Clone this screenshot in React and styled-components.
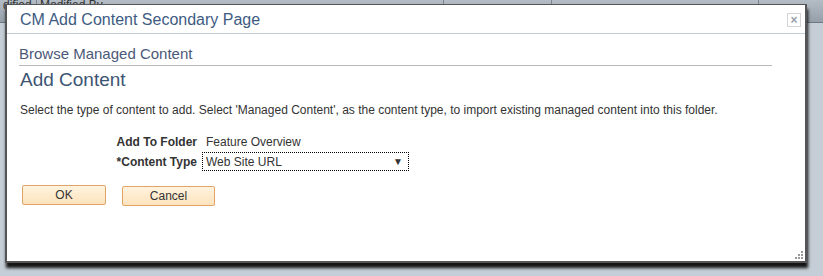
import React from "react";
import styled, { createGlobalStyle } from "styled-components";

const GlobalStyle = createGlobalStyle`
  html, body {
    margin: 0;
    padding: 0;
    background: #c5ced6;
    font-family: "Liberation Sans", Arial, sans-serif;
  }
`;

const Page = styled.div`
  position: relative;
  width: 823px;
  height: 276px;
  overflow: hidden;
  background: #c5ced6;
`;

const BackHeader = styled.div`
  display: flex;
  height: 22px;
  background: linear-gradient(#b4bdc6, #959fa9);
  border-bottom: 1px solid #6f7780;
  font-size: 12px;
  color: #333;
`;

const BackCell = styled.div`
  width: ${(p) => p.w}px;
  border-right: 1px solid #7d858e;
  padding: 0 3px;
  line-height: 10px;
  white-space: nowrap;
  overflow: hidden;
`;

const Modal = styled.div`
  position: absolute;
  left: 5px;
  top: 4px;
  width: 798px;
  height: 256px;
  background: #fff;
  border: 1px solid #555;
  border-width: 1px 2px 2px 2px;
  box-shadow: 1px 5px 3px rgba(0, 0, 0, 0.9);
  display: flex;
  flex-direction: column;
`;

const TitleBar = styled.div`
  display: flex;
  align-items: center;
  justify-content: space-between;
  height: 28px;
  padding: 0 4px 0 13px;
  border-bottom: 1px solid #c3cdd6;
`;

const Title = styled.div`
  font-size: 16px;
  color: #3e5b82;
  padding-top: 2px;
`;

const CloseButton = styled.div`
  width: 12px;
  height: 12px;
  border: 1px solid #d4d4d4;
  display: flex;
  align-items: center;
  justify-content: center;
  color: #98a0aa;
  font-size: 12px;
  font-weight: bold;
  line-height: 1;
  margin-top: 2px;
`;

const Body = styled.div`
  position: relative;
  flex: 1;
  padding: 11px 33px 0 12px;
`;

const Breadcrumb = styled.div`
  font-size: 15px;
  color: #4b5978;
  padding-bottom: 3px;
  border-bottom: 1px solid #b9b9b9;
`;

const Heading = styled.div`
  font-size: 19px;
  color: #3d5472;
  margin-top: 3px;
  margin-left: 1px;
`;

const Description = styled.div`
  font-size: 12px;
  color: #333;
  margin-top: 12px;
  margin-left: 1px;
`;

const Form = styled.div`
  display: grid;
  grid-template-columns: 178px auto;
  column-gap: 5px;
  row-gap: 3px;
  align-items: center;
  margin-top: 18px;
`;

const Label = styled.div`
  font-size: 12px;
  font-weight: bold;
  color: #333;
  text-align: right;
`;

const Value = styled.div`
  font-size: 12px;
  color: #333;
  padding-left: 4px;
`;

const Select = styled.div`
  box-sizing: content-box;
  width: 197px;
  height: 17px;
  border: 1px dotted #000;
  display: flex;
  align-items: center;
  justify-content: space-between;
  padding: 0 5px 0 3px;
  font-size: 12px;
  color: #333;
`;

const Arrow = styled.span`
  font-size: 10px;
  color: #333;
`;

const Actions = styled.div`
  display: flex;
  gap: 16px;
  margin-top: 14px;
  margin-left: 3px;
`;

const Button = styled.div`
  width: ${(p) => p.w}px;
  height: 18px;
  border: 1px solid #e2a466;
  border-radius: 2px;
  background: linear-gradient(#fff3df, #fde3bd);
  display: flex;
  align-items: center;
  justify-content: center;
  font-size: 12px;
  color: #333;
  margin-top: ${(p) => p.dy || 0}px;
`;

const Grip = styled.svg`
  position: absolute;
  right: 1px;
  bottom: 1px;
`;

export default function App() {
  return (
    <Page>
      <GlobalStyle />
      <BackHeader>
        <BackCell w={30}>dified</BackCell>
        <BackCell w={400}>Modified By</BackCell>
        <BackCell w={101}></BackCell>
        <BackCell w={200}></BackCell>
      </BackHeader>
      <Modal>
        <TitleBar>
          <Title>CM Add Content Secondary Page</Title>
          <CloseButton>×</CloseButton>
        </TitleBar>
        <Body>
          <Breadcrumb>Browse Managed Content</Breadcrumb>
          <Heading>Add Content</Heading>
          <Description>
            Select the type of content to add. Select 'Managed Content', as the content type, to import existing managed content into this folder.
          </Description>
          <Form>
            <Label>Add To Folder</Label>
            <Value>Feature Overview</Value>
            <Label>*Content Type</Label>
            <Select>
              <span>Web Site URL</span>
              <Arrow>▼</Arrow>
            </Select>
          </Form>
          <Actions>
            <Button w={82}>OK</Button>
            <Button w={91} dy={1}>Cancel</Button>
          </Actions>
          <Grip width="10" height="10" viewBox="0 0 10 10">
            <rect x="7" y="1" width="2" height="2" fill="#999" />
            <rect x="4" y="4" width="2" height="2" fill="#999" />
            <rect x="7" y="4" width="2" height="2" fill="#999" />
            <rect x="1" y="7" width="2" height="2" fill="#999" />
            <rect x="4" y="7" width="2" height="2" fill="#999" />
            <rect x="7" y="7" width="2" height="2" fill="#999" />
          </Grip>
        </Body>
      </Modal>
    </Page>
  );
}
